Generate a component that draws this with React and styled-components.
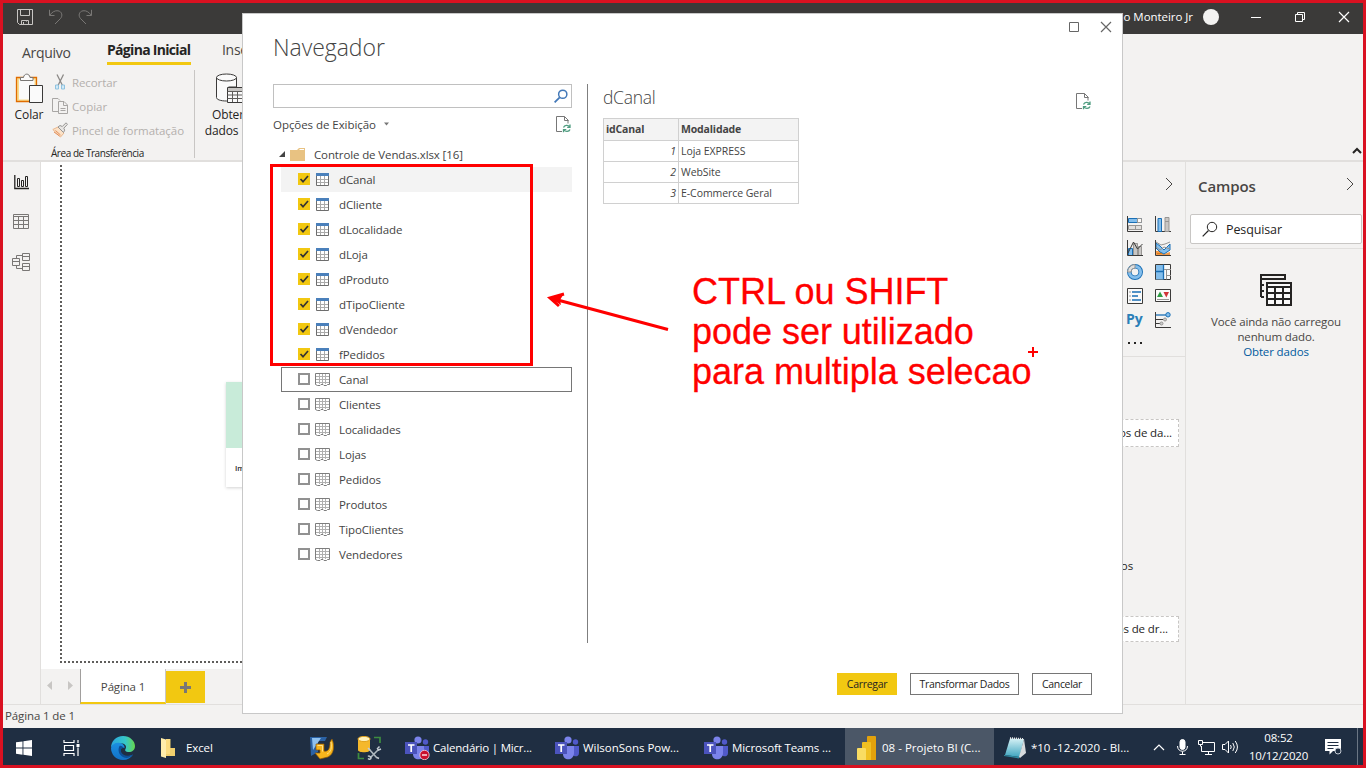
import React from "react";
import styled, { createGlobalStyle } from "styled-components";

const Global = createGlobalStyle`
  * { box-sizing: border-box; }
  body { margin: 0; overflow: hidden; font-family: "Open Sans", "Noto Sans", sans-serif; font-size: 11.5px; letter-spacing: -0.12px; color: #252423; }
  svg { display: block; flex: none; }
`;

const Screen = styled.div`
  position: relative;
  width: 1366px;
  height: 768px;
  border: 3px solid #d91121;
  background: #f3f2f1;
  display: flex;
  flex-direction: column;
  overflow: hidden;
`;

/* ---------- title bar ---------- */
const TitleBar = styled.header`
  height: 31px;
  flex: none;
  background: #3b3a39;
  color: #fff;
  display: flex;
  align-items: center;
  padding: 0 13px 3px 14px;
  gap: 15px;
`;
const DocTitle = styled.div`
  flex: 1;
  padding: 0 0 2px 352px;
  white-space: nowrap;
`;
const UserName = styled.div`
  letter-spacing: -0.05px;
  padding-bottom: 2px;
  margin-right: -5px;
`;
const Avatar = styled.div`
  width: 16px;
  height: 16px;
  border-radius: 50%;
  background: #f3f2f1;
`;
const WindowButtons = styled.div`
  display: flex;
  gap: 32px;
  margin-left: 16px;
`;

/* ---------- ribbon ---------- */
const Ribbon = styled.section`
  height: 128px;
  flex: none;
  border-bottom: 2px solid #e1dfdd;
  position: relative;
`;
const Tabs = styled.nav`
  display: flex;
  height: 36px;
  padding-left: 19px;
  font-size: 14px;
`;
const Tab = styled.div`
  height: 31px;
  line-height: 32px;
  white-space: nowrap;
  width: ${(p) => p.$w}px;
  margin-right: ${(p) => p.$mr || 0}px;
  padding-top: ${(p) => p.$pt || 0}px;
  letter-spacing: ${(p) => p.$ls || 0}px;
  color: ${(p) => (p.$active ? "#252423" : "#484644")};
  font-weight: ${(p) => (p.$active ? 700 : 400)};
  border-bottom: ${(p) => (p.$active ? "3px solid #f2c811" : "none")};
`;
const Tools = styled.div`
  display: flex;
  height: 90px;
`;
const ClipboardGroup = styled.div`
  width: 192px;
  height: 88px;
  border-right: 1px solid #c8c6c4;
  display: grid;
  grid-template-columns: 49px 1fr;
  grid-template-rows: 72px 16px;
`;
const BigButton = styled.div`
  display: flex;
  flex-direction: column;
  align-items: center;
  line-height: 16px;
  padding: 3px 0 0 ${(p) => p.$pl || 0}px;
  width: ${(p) => p.$w}px;
  text-align: center;
  font-size: 12px;
  white-space: nowrap;
  svg { margin-bottom: 3px; }
`;
const ButtonLabel = styled.span`
  margin-right: ${(p) => p.$shift || 0}px;
`;
const SmallList = styled.div`
  display: flex;
  flex-direction: column;
`;
const SmallButton = styled.div`
  height: 24px;
  display: flex;
  align-items: center;
  gap: 4px;
  color: #b3b0ad;
  font-size: 11.5px;
  letter-spacing: ${(p) => p.$ls || 0}px;
`;
const GroupLabel = styled.div`
  grid-column: 1 / 3;
  padding-left: 48px;
  font-size: 10px;
  line-height: 22px;
  letter-spacing: -0.45px;
`;
const Collapse = styled.div`
  position: absolute;
  right: 1px;
  top: 113px;
`;

/* ---------- work area ---------- */
const Work = styled.main`
  height: 543px;
  flex: none;
  display: flex;
  border-bottom: 1px solid #e1dfdd;
`;
const ViewRail = styled.nav`
  width: 38px;
  border-right: 1px solid #e1dfdd;
  display: flex;
  flex-direction: column;
  align-items: center;
  padding: 12px 1px 0 0;
  gap: 23px;
  svg:last-child { margin-top: 1px; }
`;
const CanvasColumn = styled.div`
  flex: 1;
  min-width: 0;
  display: flex;
  flex-direction: column;
`;
const Canvas = styled.div`
  height: 507px;
  background: #fff;
  padding: 3px 0 6px 19px;
`;
const Page = styled.div`
  height: 498px;
  padding: 217px 0 0 166px;
  background:
    repeating-linear-gradient(180deg, #605e5c 0 2px, transparent 2px 4px) left top / 2px 100% no-repeat,
    repeating-linear-gradient(90deg, #605e5c 0 2px, transparent 2px 4px) left bottom / 100% 2px no-repeat;
`;
const StartCard = styled.div`
  width: 180px;
  height: 105px;
  border-top: 66px solid #c8ebd9;
  box-shadow: 0 1px 3px rgba(0, 0, 0, 0.18);
  font-size: 7.5px;
  font-weight: 600;
  line-height: 10px;
  padding: 15px 9px;
`;
const PageTabs = styled.div`
  height: 35px;
  display: flex;
`;
const PageArrows = styled.div`
  width: 39px;
  display: flex;
  justify-content: space-between;
  padding: 12px 7px 0 6px;
`;
const PageTab = styled.div`
  width: 86px;
  background: #fff;
  border-left: 1px solid #a19f9d;
  border-right: 1px solid #c8c6c4;
  border-bottom: 2px solid #f2c811;
  text-align: center;
  line-height: 35px;
  font-size: 11.5px;
  letter-spacing: -0.15px;
  color: #484644;
`;
const AddPage = styled.div`
  width: 39px;
  height: 32px;
  margin-top: 2px;
  background: #f2c811;
  display: grid;
  place-items: center;
`;

const VisPane = styled.aside`
  width: 190px;
  border-right: 1px solid #e1dfdd;
  display: flex;
  flex-direction: column;
`;
const VisHead = styled.div`
  height: 51px;
  display: flex;
  justify-content: flex-end;
  padding: 15px 12px 0 0;
`;
const VisGrid = styled.div`
  display: grid;
  grid-template-columns: 16px 16px;
  grid-auto-rows: 16px;
  column-gap: 12px;
  row-gap: 8px;
  justify-content: end;
  padding: 3px 14px 0 0;
  height: 144px;
  border-bottom: 1px solid #e1dfdd;
`;
const PyMark = styled.span`
  font-weight: 700;
  font-size: 14px;
  line-height: 14px;
  margin-left: -1px;
  color: #2b7fb8;
`;
const Well = styled.div`
  height: ${(p) => p.$h}px;
  margin: ${(p) => p.$mt}px 6px 0 8px;
  border: 1px dashed #c8c6c4;
  background: #fff;
  display: flex;
  align-items: center;
  justify-content: flex-end;
  padding: 0 ${(p) => p.$pr}px 1px 0;
  white-space: nowrap;
`;
const PaneText = styled.div`
  height: 16px;
  line-height: 16px;
  margin: 111px 52px 0 0;
  text-align: right;
  white-space: nowrap;
`;

const FieldsPane = styled.aside`
  width: 177px;
  display: flex;
  flex-direction: column;
`;
const FieldsHead = styled.div`
  height: 52px;
  display: flex;
  justify-content: space-between;
  padding: 13px 9px 0 12px;
  font-size: 15px;
  line-height: 22px;
  font-weight: 600;
  letter-spacing: -0.1px;
  color: #484644;
  svg { margin-top: 2px; }
`;
const FieldsSearch = styled.div`
  height: 30px;
  margin: 0 1px 0 4px;
  border: 1px solid #c8c6c4;
  border-radius: 2px;
  background: #fff;
  display: flex;
  align-items: center;
  padding-left: 11px;
  gap: 8px;
  font-size: 12.5px;
`;
const EmptyFields = styled.div`
  margin-top: 4px;
  border-top: 1px solid #e1dfdd;
  padding: 25px 0 0 3px;
  display: flex;
  flex-direction: column;
  align-items: center;
  text-align: center;
  line-height: 15px;
  color: #484644;
  letter-spacing: -0.13px;
  svg { margin-bottom: 8px; }
`;
const DataLink = styled.span` color: #005a9e; `;

const StatusBar = styled.footer`
  height: 23px;
  flex: none;
  padding-left: 2px;
  line-height: 22px;
  color: #484644;
`;

/* ---------- taskbar ---------- */
const Taskbar = styled.div`
  height: 37px;
  flex: none;
  display: flex;
  background: #1f2e42;
  color: #fff;
`;
const Task = styled.div`
  width: ${(p) => p.$w}px;
  padding: 2px 0 0 ${(p) => p.$pad}px;
  background: ${(p) => (p.$active ? "#4b5767" : "transparent")};
  display: flex;
  align-items: center;
  gap: ${(p) => p.$gap || 3}px;
  white-space: nowrap;
  letter-spacing: ${(p) => p.$ls ?? -0.2}px;
`;
const Tray = styled.div`
  flex: 1;
  display: flex;
  align-items: center;
  padding: 1px 5px 0 10px;
`;
const TrayIcon = styled.div`
  width: ${(p) => p.$w}px;
  padding-left: ${(p) => p.$pl || 0}px;
`;
const Clock = styled.div`
  width: 65px;
  text-align: center;
  line-height: 18px;
  letter-spacing: -0.2px;
`;
const ShowDesktop = styled.div`
  margin: -1px 0 0 auto;
  width: 1px;
  height: 37px;
  background: #6b7684;
`;

/* ---------- navigator dialog ---------- */
const Dialog = styled.section`
  position: absolute;
  left: 239px;
  top: 10px;
  width: 881px;
  height: 701px;
  border: 1px solid #c8c8c8;
  background: #fff;
  color: #444;
  display: flex;
  flex-direction: column;
  padding: 0 30px;
`;
const DialogHead = styled.div`
  height: 70px;
  display: flex;
  justify-content: space-between;
`;
const DialogTitle = styled.h1`
  margin: 18px 0 0;
  font-size: 23px;
  line-height: 30px;
  font-weight: 300;
  letter-spacing: -0.05px;
`;
const DialogButtons = styled.div`
  display: flex;
  align-items: center;
  height: 12px;
  gap: 21px;
  margin: 7px -20px 0 0;
`;
const DialogBody = styled.div`
  height: 559px;
  display: flex;
`;
const TreePane = styled.div`
  width: 315px;
  padding-right: 15px;
  border-right: 1px solid #7f7f7f;
`;
const SearchBox = styled.div`
  height: 24px;
  border: 1px solid #c0c0c0;
  display: flex;
  justify-content: flex-end;
  padding: 4px 3px 0 0;
`;
const OptionsRow = styled.div`
  height: 34px;
  display: flex;
  align-items: center;
  gap: 8px;
  padding-bottom: 2px;
  letter-spacing: -0.05px;
  & > :last-child { margin: 0 1px 0 auto; }
`;
const FolderRow = styled.div`
  height: 25px;
  display: flex;
  align-items: center;
  padding: 0 0 1px 6px;
  svg:first-child { margin-right: 5px; }
  svg:nth-child(2) { margin-right: 9px; }
`;
const TreeRow = styled.div`
  height: 25px;
  margin-left: 8px;
  padding: 0 0 1px 17px;
  display: flex;
  align-items: center;
  background: ${(p) => (p.$hover ? "#f3f3f3" : "transparent")};
  box-shadow: ${(p) => (p.$focus ? "inset 0 0 0 1px #767676" : "none")};
  svg:nth-child(2) { margin: ${(p) => (p.$sheet ? 2 : 1)}px 9px 0 5px; }
`;
const Preview = styled.div`
  flex: 1;
  padding-left: 15px;
`;
const PreviewHead = styled.div`
  height: 34px;
  display: flex;
  justify-content: space-between;
  font-size: 17.5px;
  line-height: 27px;
  font-weight: 300;
  letter-spacing: -0.3px;
  svg { margin: 9px 1px 0 0; }
`;
const DataGrid = styled.div`
  width: 196px;
  display: grid;
  grid-template-columns: 74px 119px;
  grid-template-rows: 21px 20px 20px 20px;
  gap: 1px;
  padding: 1px;
  background: #d0d0d0;
  font-size: 10.5px;
`;
const Cell = styled.div`
  background: ${(p) => (p.$head ? "#f3f3f3" : "#fff")};
  font-weight: ${(p) => (p.$head ? 700 : 400)};
  font-style: ${(p) => (p.$num ? "italic" : "normal")};
  text-align: ${(p) => (p.$num ? "right" : "left")};
  letter-spacing: ${(p) => (p.$head ? "-0.15px" : "-0.06px")};
  padding: 0 2px;
  line-height: 20px;
`;
const DialogActions = styled.div`
  display: flex;
  justify-content: flex-end;
  gap: 13px;
  padding-top: 30px;
`;
const ActionButton = styled.div`
  width: ${(p) => p.$w}px;
  height: 22px;
  border: 1px solid ${(p) => (p.$primary ? "#f2c811" : "#767676")};
  background: ${(p) => (p.$primary ? "#f2c811" : "#fff")};
  text-align: center;
  line-height: 20px;
  font-size: 10.5px;
  letter-spacing: -0.3px;
  color: #252423;
`;

/* ---------- pen annotations over the desktop ---------- */
const Highlight = styled.div`
  position: absolute;
  left: 267px;
  top: 161px;
  width: 263px;
  height: 202px;
  border: 3px solid #f00;
`;
const Arrow = styled.svg`
  position: absolute;
  left: 543px;
  top: 288px;
`;
const Note = styled.div`
  position: absolute;
  left: 689px;
  top: 269px;
  font: 36px/40px "Liberation Sans", Arial, sans-serif;
  letter-spacing: -0.03px;
  -webkit-text-stroke: 0.3px #f00;
  color: #f00;
  white-space: pre;
`;
const PenCursor = styled.svg`
  position: absolute;
  left: 1025px;
  top: 344px;
`;

/* ---------- icons ---------- */
const Svg = ({ w = 16, h = w, children, ...rest }) => (
  <svg width={w} height={h} viewBox={`0 0 ${w} ${h}`} fill="none" {...rest}>{children}</svg>
);
const Chevron = ({ color = "#484644" }) => (
  <Svg w={8} h={14} stroke={color}><path d="M1 1l6 6-6 6" /></Svg>
);
const CloseX = ({ color }) => <Svg w={12} stroke={color} strokeWidth="1.2"><path d="M1 1l10 10M11 1L1 11" /></Svg>;
const SaveIcon = () => (
  <Svg w={16} stroke="#c8c6c4">
    <path d="M.5.5h15v15h-13l-2-2zM3.5.5v6h9v-6M4.5 15.5v-4h7v4M6.500 13v2.500M9.500 11.500v1" />
  </Svg>
);
const UndoIcon = ({ flip }) => (
  <Svg w={15} h={16} stroke="#797775" transform={flip ? "scale(-1,1)" : undefined}>
    <path d="M1.500.8v5.700h5M1.800 6.200C4 3 7 1.300 10 1.800c4 .6 5 5 2.500 7.700L7 15" />
  </Svg>
);
const PasteIcon = () => (
  <Svg w={28} h={31}>
    <path d="M1.500 4.500h20v24h-20z" fill="#fadc8c" stroke="#e06c00" strokeWidth="1.300" />
    <path d="M4 6.500h15.500v20H4z" fill="#fafafa" />
    <path d="M5.500 7.500v-3h3c.5-4.500 6-4.500 6.500 0h3v3z" fill="#fafafa" stroke="#797774" />
    <path d="M14.500 12.500h13v17h-13z" fill="#fafafa" stroke="#3b3a39" />
  </Svg>
);
const CutIcon = () => (
  <Svg w={16}>
    <path d="M5 .5l5.500 11M11.500.5L6 11.500" stroke="#8a8886" strokeWidth="1.300" />
    <path d="M3.500 11h3v4h-3zM9.500 11h3v4h-3z" fill="#d3eaf7" stroke="#8fc3e0" />
  </Svg>
);
const CopyIcon = () => (
  <Svg w={16} stroke="#a8a6a4">
    <path d="M6.500 13.500h-6V.5h5.500l2 2" /><path d="M6.500 3.500h5.500l3.500 3.500v8.500h-9zM11.500 3.500v4h4M8.500 10.500h5M8.500 12.500h5" fill="#f3f2f1" />
  </Svg>
);
const BrushIcon = () => (
  <Svg w={16}>
    <path d="M.8 7.500L6 5l6 6-3.500 4z" fill="#fbe2c8" stroke="#eab78c" />
    <path d="M3.500 8.500l5 4.500M2 10l5.500 4" stroke="#e58f5a" />
    <path d="M6 5l2-1.500 2.300 1L14 .8l1.500 1.500-3.700 3.900.9 2-1.200 2.300z" fill="#e8e6e4" stroke="#979593" />
  </Svg>
);
const DatabaseIcon = () => (
  <Svg w={34} h={31} stroke="#3b3a39">
    <path d="M1.500 4.500v20c0 2 4 3.500 10 3.500h2V14h8V4.500" fill="#fafafa" />
    <ellipse cx="11.500" cy="4.500" rx="10" ry="3.500" fill="#fafafa" />
    <path d="M12.500 14.500h19v15h-19z" fill="#fafafa" /><path d="M13 15h18v3H13z" fill="#c8c6c4" stroke="none" />
    <path d="M12.500 18.500h19M12.500 22h19M12.500 25.500h19M17.500 18v11M22.500 18v11M27.500 18v11" stroke="#605e5c" />
  </Svg>
);
const ReportIcon = () => (
  <Svg w={15} h={17} stroke="#252423">
    <path d="M.8 1v13.500H15" strokeWidth="1.300" /><path d="M3.500 4.500h2v8h-2zM7.500 6.500h2v6h-2zM11.500 2.500h2v10h-2z" />
  </Svg>
);
const TableViewIcon = () => (
  <Svg w={16} h={15} stroke="#797775"><path d="M.5.5h15v14H.5zM.5 2.500h15M.5 6.500h15M.5 10.500h15M5.500 2.500v12M10.500 2.500v12" /></Svg>
);
const ModelIcon = () => (
  <Svg w={18} stroke="#797775">
    <path d="M.5 5.500h7v7h-7zM.5 8.500h7M10.500.5h7v7h-7zM10.500 3.500h7M10.500 10.500h7v7h-7zM10.500 13.500h7M4.500 5.500v-3h6M4.500 12.500v3h6" />
  </Svg>
);
const Lens = ({ color, size, w = 1 }) => (
  <svg width={size} height={size} viewBox="0 0 16 16" fill="none" stroke={color} strokeWidth={w}>
    <circle cx="10" cy="6" r="4.700" /><path d="M6.500 9.500L.7 15.300" strokeWidth={w * 1.200} />
  </svg>
);
const BigTables = () => (
  <Svg w={32} stroke="#252423" strokeWidth="2">
    <path d="M1 23V1h24v5M1 5h24M1 11h3M1 17h3M1 23h3" /><path d="M7 9h24v22H7z" fill="#fafafa" />
    <path d="M7 13h24M7 19h24M7 25h24M15 13v18M23 13v18" />
  </Svg>
);
const RefreshDoc = () => (
  <Svg w={15} h={17}>
    <path d="M6 15.500H.5V.5h8l3.500 3.500v3.500M8.500.5v4h4" stroke="#777" />
    <path d="M7.500 11.500c1-2.500 4.500-3 6-.8M14 8.500v2.800h-2.800M14 13.500c-1 2.300-4.500 2.700-6 .5M7.500 16.300v-2.700h2.800" stroke="#4f9c80" strokeWidth="1.300" />
  </Svg>
);
const Checkbox = ({ on }) => on ? (
  <Svg w={12}><path d="M0 0h12v12H0z" fill="#f2c811" /><path d="M2.500 6l2.500 2.700L10 3" stroke="#333" strokeWidth="1.700" /></Svg>
) : (
  <Svg w={12}><path d="M1 1h10v10H1z" stroke="#919191" strokeWidth="2" fill="#fff" /></Svg>
);
const TableIcon = () => (
  <Svg w={15} h={13}>
    <path d="M1.500.5h12v12h-12z" fill="#fff" stroke="#6d6d6d" />
    <path d="M2 6.500h11M2 9.500h11M5.500 3v9M9.500 3v9" stroke="#aaa" /><path d="M1 0h13v3H1z" fill="#4a80bb" />
  </Svg>
);
const SheetIcon = () => (
  <Svg w={15} h={14}>
    <path d="M1 3.500h13M1 6.500h13M1 9.500h13M4.500 1v10M7.500 1v10M10.500 1v10" stroke="#b0b0b0" />
    <path d="M.5.500h14v11h-2l-1 1h-2.500l-1-1h-2l-1 1h-2.500l-2-1z" stroke="#7d7d7d" />
  </Svg>
);
const TeamsIcon = ({ busy }) => (
  <Svg w={25} h={24}>
    <circle cx="20.500" cy="6" r="2.700" fill="#5059c9" /><path d="M17 10h7v7c0 4-5 4.500-7 1z" fill="#5059c9" />
    <circle cx="13" cy="4" r="3.600" fill="#7b83eb" /><path d="M8 10h11v7c0 8-11 8.500-11 1z" fill="#7b83eb" />
    <path d="M0 6h12v12H0z" fill="#4b53bc" />
    <path d="M3 9h6.500M6.200 9v7" stroke="#fff" strokeWidth="1.700" />
    {busy && <><circle cx="19.500" cy="19" r="4.700" fill="#c8102e" stroke="#f3d5da" strokeWidth=".8" /><path d="M17 19h5" stroke="#fff" strokeWidth="1.300" /></>}
  </Svg>
);
const EdgeIcon = () => (
  <Svg w={24}>
    <defs>
      <linearGradient id="edgeTop" x1="0" x2="1"><stop offset="0" stopColor="#2aa5dd" /><stop offset=".6" stopColor="#36c7c9" /><stop offset="1" stopColor="#66d84c" /></linearGradient>
      <linearGradient id="edgeSide" x2="0" y2="1"><stop stopColor="#1b8fe0" /><stop offset="1" stopColor="#1272c8" /></linearGradient>
    </defs>
    <path d="M0 12C0 5 5 0 12 0c7 0 12 5 12 10 0 4-3 6-6 6-3.500 0-4.500-1.500-3.500-3 2-4-2-6-5-5.500C5 8 1 9 0 12z" fill="url(#edgeTop)" />
    <path d="M0 12c1-4 5-6 9-5 3 .5 5 3 4.500 5-3-1-4.500 1-4 3.500.7 4.500 7 6.500 12.500 3-2 3.500-5.500 5.500-10 5.500C5 24 0 18.500 0 12z" fill="url(#edgeSide)" />
    <path d="M8.500 10c-2 3.500-1 9.500 4.500 11.500 3 1 6.500 0 9-3-5.500 2.500-11 1-12-3-.5-2.500.5-3.500 2.500-3.500-1-2-3-2.500-4-2z" fill="#0d4f96" />
  </Svg>
);
const StartIcon = () => (
  <Svg w={16}><path fill="#fff" d="M0 2.300L6.500 1.400V7.600H0zM7.400 1.200L16 0v7.600H7.400zM0 8.500h6.500v6.200L0 13.800zM7.400 8.500H16V16l-8.600-1.200z" /></Svg>
);
const TaskViewIcon = () => (
  <Svg w={17} h={16} stroke="#fff" strokeWidth="1.200">
    <path d="M1 0v2.500h10V0M1 16v-2.500h10V16M1.500 5.500h9v5h-9zM15 0v3M15 7.500V16" /><path d="M13.500 4h3v3h-3z" fill="#fff" stroke="none" />
  </Svg>
);
const FolderTaskIcon = () => (
  <Svg w={15} h={20}><path d="M5 1h4.500v9H14v8H5z" fill="#f0cf6d" /><path d="M5 1h4v15H5z" fill="#fbdc80" /><path d="M0 0l5 1.500V20l-5-1.500z" fill="#ffedac" /></Svg>
);
const SourceIcon = () => (
  <Svg w={24}>
    <path d="M0 1h17l-2 4H8v11l-7 4z" fill="#2b62a5" /><path d="M2 2h9L3 14z" fill="#8fc1ef" />
    <path d="M6 8h8v7c4 1 6-2 6-9l2-3c3 7 2 15-4 18l-8 2-5-6h5v-3H6z" fill="#f7b51c" stroke="#8a5608" strokeWidth=".7" />
    <path d="M7.500 9.500h5v6M21 6c1 6 0 10-4 12" stroke="#ffe08a" />
  </Svg>
);
const DbToolsIcon = () => (
  <Svg w={25} h={24}>
    <path d="M1 3v11c0 3 12 3 12 0V3z" fill="#f5b82b" /><ellipse cx="7" cy="3" rx="6" ry="2.600" fill="#fff0b8" stroke="#e2a31d" />
    <path d="M17 1.500h6V7M1.500 17v5.500H7" stroke="#3d8c40" strokeWidth="1.700" />
    <path d="M12 13l8 9M13 22l8-8" stroke="#aeb8bf" strokeWidth="1.600" />
    <path d="M22.500 10.500l-2 2 1 1.500 2.500-1M11 20.500c1-1 3 0 3 1.500s-2 1.500-3 .5M11 12l2 2M20 21.500l2 1" stroke="#c4ccd2" strokeWidth="1.500" />
  </Svg>
);
const PowerBiIcon = () => (
  <Svg w={20} h={24}>
    <path d="M10 1q0-1 1-1h7q1 0 1 1v23h-9z" fill="#e3a20c" /><path d="M5 7q0-1 1-1h7q1 0 1 1v17H5z" fill="#f0c022" /><path d="M0 13q0-1 1-1h7q1 0 1 1v11H1q-1 0-1-1z" fill="#f9dc62" />
  </Svg>
);
const NotepadIcon = () => (
  <Svg w={23} h={22}>
    <defs><linearGradient id="notepad" x2="0" y2="1"><stop stopColor="#d5f1f5" /><stop offset="1" stopColor="#3fa5c0" /></linearGradient></defs>
    <path d="M6 1.500L20 2l-4.500 18L1 18z" fill="url(#notepad)" />
    <path d="M20 2l2 14-6 5-1-1z" fill="#d7dbde" /><path d="M6 1.200L20 2" stroke="#e8e8e8" strokeWidth="2" strokeDasharray="1 1" />
    <path d="M0 18l15 2v1.500L0 19z" fill="#2e8ba3" />
  </Svg>
);
const NotificationIcon = () => (
  <Svg w={18} h={16}>
    <path d="M0 0h16v12H8l-3.500 3.500V12H0z" fill="#fff" /><path d="M2.500 3.500h11M2.500 6.500h11M2.500 9.500h6" stroke="#1f2e42" />
    <circle cx="13" cy="12" r="3" stroke="#c3cad2" fill="#1f2e42" />
  </Svg>
);

/* small glyphs of the visuals gallery */
const G = { dark: "#3b3a39", mid: "#979593", blue: "#1a6fb5", fill: "#83beec" };
const visuals = [
  <Svg key="bars"><path d="M1.500 2.500h13v4h-13z" fill={G.fill} stroke={G.blue} /><path d="M10.500 2.500h4v4h-4z" fill="#fafafa" stroke={G.mid} /><path d="M1.500 9.500h13v4h-13zM8.500 9.500h6v4h-6z" fill="#e1dfdd" stroke={G.mid} /><path d="M.5 0v15.500H16" stroke={G.dark} /></Svg>,
  <Svg key="columns"><path d="M.5 0v15.500H16" stroke={G.dark} /><path d="M3 2.500h3.500v13H3z" fill={G.fill} stroke={G.blue} /><path d="M10 5.500h4v10h-4zM10 1.500h4v4h-4z" fill="#c8c6c4" stroke={G.mid} /></Svg>,
  <Svg key="combo"><path d="M1.500 8.500h4v7h-4z" fill={G.fill} stroke={G.blue} /><path d="M6.500 3.500h4v12h-4zM11.500 6.500h3v9h-3z" fill="#c8c6c4" stroke={G.mid} /><path d="M.5 0v15.500H16M1 13L6.500 2l4 7 5-5" stroke={G.dark} /></Svg>,
  <Svg key="ribbon"><path d="M1 11h4l4 3 6-2v3H1z" fill="#f2994a" /><path d="M1 3l4 3 4 4 6-6v6l-6 4-4-2-4-4z" fill={G.fill} stroke={G.blue} /><path d="M1 7l4 3 4-3 6 2M1 2l5 3 4-1 5-2" stroke={G.mid} /><path d="M2 13.500h5" stroke="#d87a1b" /><path d="M.5 0v15.500H16" stroke={G.dark} /></Svg>,
  <Svg key="donut"><circle cx="8" cy="8" r="5.700" stroke={G.blue} strokeWidth="4.600" /><circle cx="8" cy="8" r="5.700" stroke={G.fill} strokeWidth="2.800" /><path d="M8 2.300A5.700 5.700 0 0 0 2.300 8" stroke="#e1dfdd" strokeWidth="3" /><path d="M8 .5A7.500 7.500 0 0 0 .5 8H4a4 4 0 0 1 4-4z" stroke={G.mid} /></Svg>,
  <Svg key="treemap"><path d="M.5.500h15v15H.5z" fill="#fafafa" stroke={G.dark} /><path d="M1 1h7.500v14.500H1z" fill={G.fill} /><path d="M8.500.5v15M.5 7.500h8" stroke={G.blue} strokeWidth="1.300" /><path d="M9 5.500h7M11.500 5.500v10M12 11.500h4" stroke={G.mid} /></Svg>,
  <Svg key="slicer"><path d="M.5.500h15v15H.5z" fill="#fafafa" stroke={G.dark} /><path d="M5 4h9M5 8h6M5 12h9" stroke={G.blue} strokeWidth="1.300" /><path d="M2.500 4h1M2.500 8h1M2.500 12h1" stroke={G.dark} /></Svg>,
  <Svg key="kpi"><path d="M.5 1.500h15v12H.5z" fill="#fafafa" stroke={G.dark} /><path d="M2 9l3-5.500L8 9z" fill="#2f9e44" /><path d="M8.500 4H14l-2.700 5.500z" fill="#d13438" /><path d="M2 11.500h12" stroke={G.mid} /></Svg>,
  <PyMark key="py">Py</PyMark>,
  <Svg key="influencers"><path d="M.5 0v15.500H16" stroke={G.dark} /><path d="M1 3h10" stroke={G.blue} strokeWidth="1.300" /><circle cx="13" cy="2.800" r="2.200" fill={G.fill} stroke={G.blue} /><path d="M1 7.500h7M1 11.500h4" stroke={G.dark} /><circle cx="10" cy="7.500" r="1.500" fill="#ccc" stroke={G.mid} /><circle cx="6.500" cy="11.500" r="1.500" fill="#ccc" stroke={G.mid} /></Svg>,
  <Svg key="more"><path fill="#252423" d="M1 6h2v2H1zM7 6h2v2H7zM13 6h2v2h-2z" /></Svg>,
];

const queryTables = ["dCanal", "dCliente", "dLocalidade", "dLoja", "dProduto", "dTipoCliente", "dVendedor", "fPedidos"];
const sheets = ["Canal", "Clientes", "Localidades", "Lojas", "Pedidos", "Produtos", "TipoClientes", "Vendedores"];
const previewRows = [["1", "Loja EXPRESS"], ["2", "WebSite"], ["3", "E-Commerce Geral"]];

export default function App() {
  return (
    <Screen>
      <Global />
      <TitleBar>
        <SaveIcon /><UndoIcon /><UndoIcon flip />
        <DocTitle>08 - Projeto BI (Controle de Vendas) - Power BI Desktop</DocTitle>
        <UserName>Murillo Monteiro Jr</UserName>
        <Avatar />
        <WindowButtons>
          <Svg w={12} stroke="#fff"><path d="M1 6.500h10" /></Svg>
          <Svg w={12} stroke="#fff"><path d="M1.500 3.500h7v7h-7zM3.500 3.500v-2h7v7h-2" /></Svg>
          <CloseX color="#fff" />
        </WindowButtons>
      </TitleBar>

      <Ribbon>
        <Tabs>
          <Tab $w={85} $pt={3} $ls={-0.3}>Arquivo</Tab>
          <Tab $w={84} $mr={31} $active $ls={-0.7}>Página Inicial</Tab>
          <Tab $w={60} $ls={-0.3}>Inserir</Tab>
        </Tabs>
        <Tools>
          <ClipboardGroup>
            <BigButton $w={50} $pl={2}><PasteIcon />Colar</BigButton>
            <SmallList>
              <SmallButton $ls={-0.1}><CutIcon />Recortar</SmallButton>
              <SmallButton><CopyIcon />Copiar</SmallButton>
              <SmallButton $ls={-0.05}><BrushIcon />Pincel de formatação</SmallButton>
            </SmallList>
            <GroupLabel>Área de Transferência</GroupLabel>
          </ClipboardGroup>
          <BigButton $w={66} $pl={8}><DatabaseIcon /><ButtonLabel $shift={8}>Obter<br />dados ⌄</ButtonLabel></BigButton>
        </Tools>
        <Collapse><Svg w={10} h={8} stroke="#252423" strokeWidth="2"><path d="M1 6l4-4 4 4" /></Svg></Collapse>
      </Ribbon>

      <Work>
        <ViewRail><ReportIcon /><TableViewIcon /><ModelIcon /></ViewRail>
        <CanvasColumn>
          <Canvas><Page><StartCard>Importar dados do Excel</StartCard></Page></Canvas>
          <PageTabs>
            <PageArrows>
              <Svg w={5} h={9}><path d="M5 0v9L0 4.500z" fill="#c8c6c4" /></Svg>
              <Svg w={5} h={9}><path d="M0 0v9l5-4.500z" fill="#c8c6c4" /></Svg>
            </PageArrows>
            <PageTab>Página 1</PageTab>
            <AddPage><Svg w={11} stroke="#797775" strokeWidth="3"><path d="M5.500 0v11M0 5.500h11" /></Svg></AddPage>
          </PageTabs>
        </CanvasColumn>
        <VisPane>
          <VisHead><Chevron /></VisHead>
          <VisGrid>{visuals}</VisGrid>
          <Well $h={28} $mt={62} $pr={6}>Adicione os campos de da...</Well>
          <PaneText>Entre vários relatórios</PaneText>
          <Well $h={26} $mt={42} $pr={10}>Adicione os campos de dr...</Well>
        </VisPane>
        <FieldsPane>
          <FieldsHead>Campos<Chevron /></FieldsHead>
          <FieldsSearch><Lens color="#252423" size={16} />Pesquisar</FieldsSearch>
          <EmptyFields>
            <BigTables />
            <span>Você ainda não carregou</span>
            <span>nenhum dado.</span>
            <DataLink>Obter dados</DataLink>
          </EmptyFields>
        </FieldsPane>
      </Work>
      <StatusBar>Página 1 de 1</StatusBar>

      <Taskbar>
        <Task $w={45} $pad={13}><StartIcon /></Task>
        <Task $w={50} $pad={15}><TaskViewIcon /></Task>
        <Task $w={52} $pad={13}><EdgeIcon /></Task>
        <Task $w={150} $pad={11} $gap={10} $ls={-0.1}><FolderTaskIcon />Excel</Task>
        <Task $w={50} $pad={10}><SourceIcon /></Task>
        <Task $w={47} $pad={7}><DbToolsIcon /></Task>
        <Task $w={150} $pad={8}><TeamsIcon busy />Calendário | Micr...</Task>
        <Task $w={149} $pad={8} $ls={-0.02}><TeamsIcon />WilsonSons Pow...</Task>
        <Task $w={149} $pad={8} $ls={-0.12}><TeamsIcon />Microsoft Teams ...</Task>
        <Task $w={149} $pad={12} $gap={5} $ls={0.02} $active><PowerBiIcon />08 - Projeto BI (C...</Task>
        <Task $w={149} $pad={10} $gap={4} $ls={-0.02}><NotepadIcon />*10 -12-2020 - BI...</Task>
        <Tray>
          <TrayIcon $w={24}><Svg w={12} h={8} stroke="#fff" strokeWidth="1.200"><path d="M1 7l5-5 5 5" /></Svg></TrayIcon>
          <TrayIcon $w={21}><Svg w={11} h={16} stroke="#fff"><rect x="3" y=".5" width="5" height="10" rx="2.500" fill="#fff" /><path d="M.5 7c0 7 10 7 10 0M5.500 12.500v3M2.500 15.500h6" /></Svg></TrayIcon>
          <TrayIcon $w={24}><Svg w={17} h={15} stroke="#fff"><path d="M5 2.500h11.500v9H3.500V6M7 14.500h7M10.500 11.500v3M.5.500h4v4h-4zM2.500 4.500v2" /></Svg></TrayIcon>
          <TrayIcon $w={24}><Svg w={17} h={14} stroke="#fff"><path d="M.5 4.500h2.500L6.500 1v12L3 9.500H.5zM8.500 5q1.500 2 0 4M10.800 3q3 4 0 8M13.200 1q4.500 6 0 12" /></Svg></TrayIcon>
          <Clock>08:52<br />10/12/2020</Clock>
          <TrayIcon $w={34} $pl={14}><NotificationIcon /></TrayIcon>
          <ShowDesktop />
        </Tray>
      </Taskbar>

      <Dialog>
        <DialogHead>
          <DialogTitle>Navegador</DialogTitle>
          <DialogButtons>
            <Svg w={10} stroke="#666"><path d="M.5.500h9v9h-9z" /></Svg>
            <CloseX color="#666" />
          </DialogButtons>
        </DialogHead>
        <DialogBody>
          <TreePane>
            <SearchBox><Lens color="#4278b8" size={14} w={1.700} /></SearchBox>
            <OptionsRow>
              Opções de Exibição
              <Svg w={5} h={4}><path d="M0 .5h5L2.500 3.500z" fill="#777" /></Svg>
              <RefreshDoc />
            </OptionsRow>
            <FolderRow>
              <Svg w={6} h={6}><path d="M6 0v6H0z" fill="#444" /></Svg>
              <Svg w={15} h={13}><path d="M0 2h7l2-2h6v13H0z" fill="#e8c282" /><path d="M9.500 1.500H14" stroke="#fff" /></Svg>
              Controle de Vendas.xlsx [16]
            </FolderRow>
            {queryTables.map((name, i) => (
              <TreeRow key={name} $hover={i === 0}><Checkbox on /><TableIcon />{name}</TreeRow>
            ))}
            {sheets.map((name, i) => (
              <TreeRow key={name} $sheet $focus={i === 0}><Checkbox /><SheetIcon />{name}</TreeRow>
            ))}
          </TreePane>
          <Preview>
            <PreviewHead>dCanal<RefreshDoc /></PreviewHead>
            <DataGrid>
              <Cell $head>idCanal</Cell><Cell $head>Modalidade</Cell>
              {previewRows.map(([id, label]) => (
                <React.Fragment key={id}><Cell $num>{id}</Cell><Cell>{label}</Cell></React.Fragment>
              ))}
            </DataGrid>
          </Preview>
        </DialogBody>
        <DialogActions>
          <ActionButton $w={60} $primary>Carregar</ActionButton>
          <ActionButton $w={109}>Transformar Dados</ActionButton>
          <ActionButton $w={60}>Cancelar</ActionButton>
        </DialogActions>
      </Dialog>

      <Highlight />
      <Arrow width="130" height="50" viewBox="0 0 130 50" fill="none" stroke="#f00" strokeWidth="3">
        <path d="M122 38.500L6 7.500M18 3L4 7l9 8" /><path d="M4 7l13-3-3 5 1 5z" fill="#f00" stroke="none" />
      </Arrow>
      <Note>{"CTRL ou SHIFT\npode ser utilizado\npara multipla selecao"}</Note>
      <PenCursor width="10" height="10" viewBox="0 0 10 10" stroke="#f00" strokeWidth="2"><path d="M5 0v10M0 5h10" /></PenCursor>
    </Screen>
  );
}
